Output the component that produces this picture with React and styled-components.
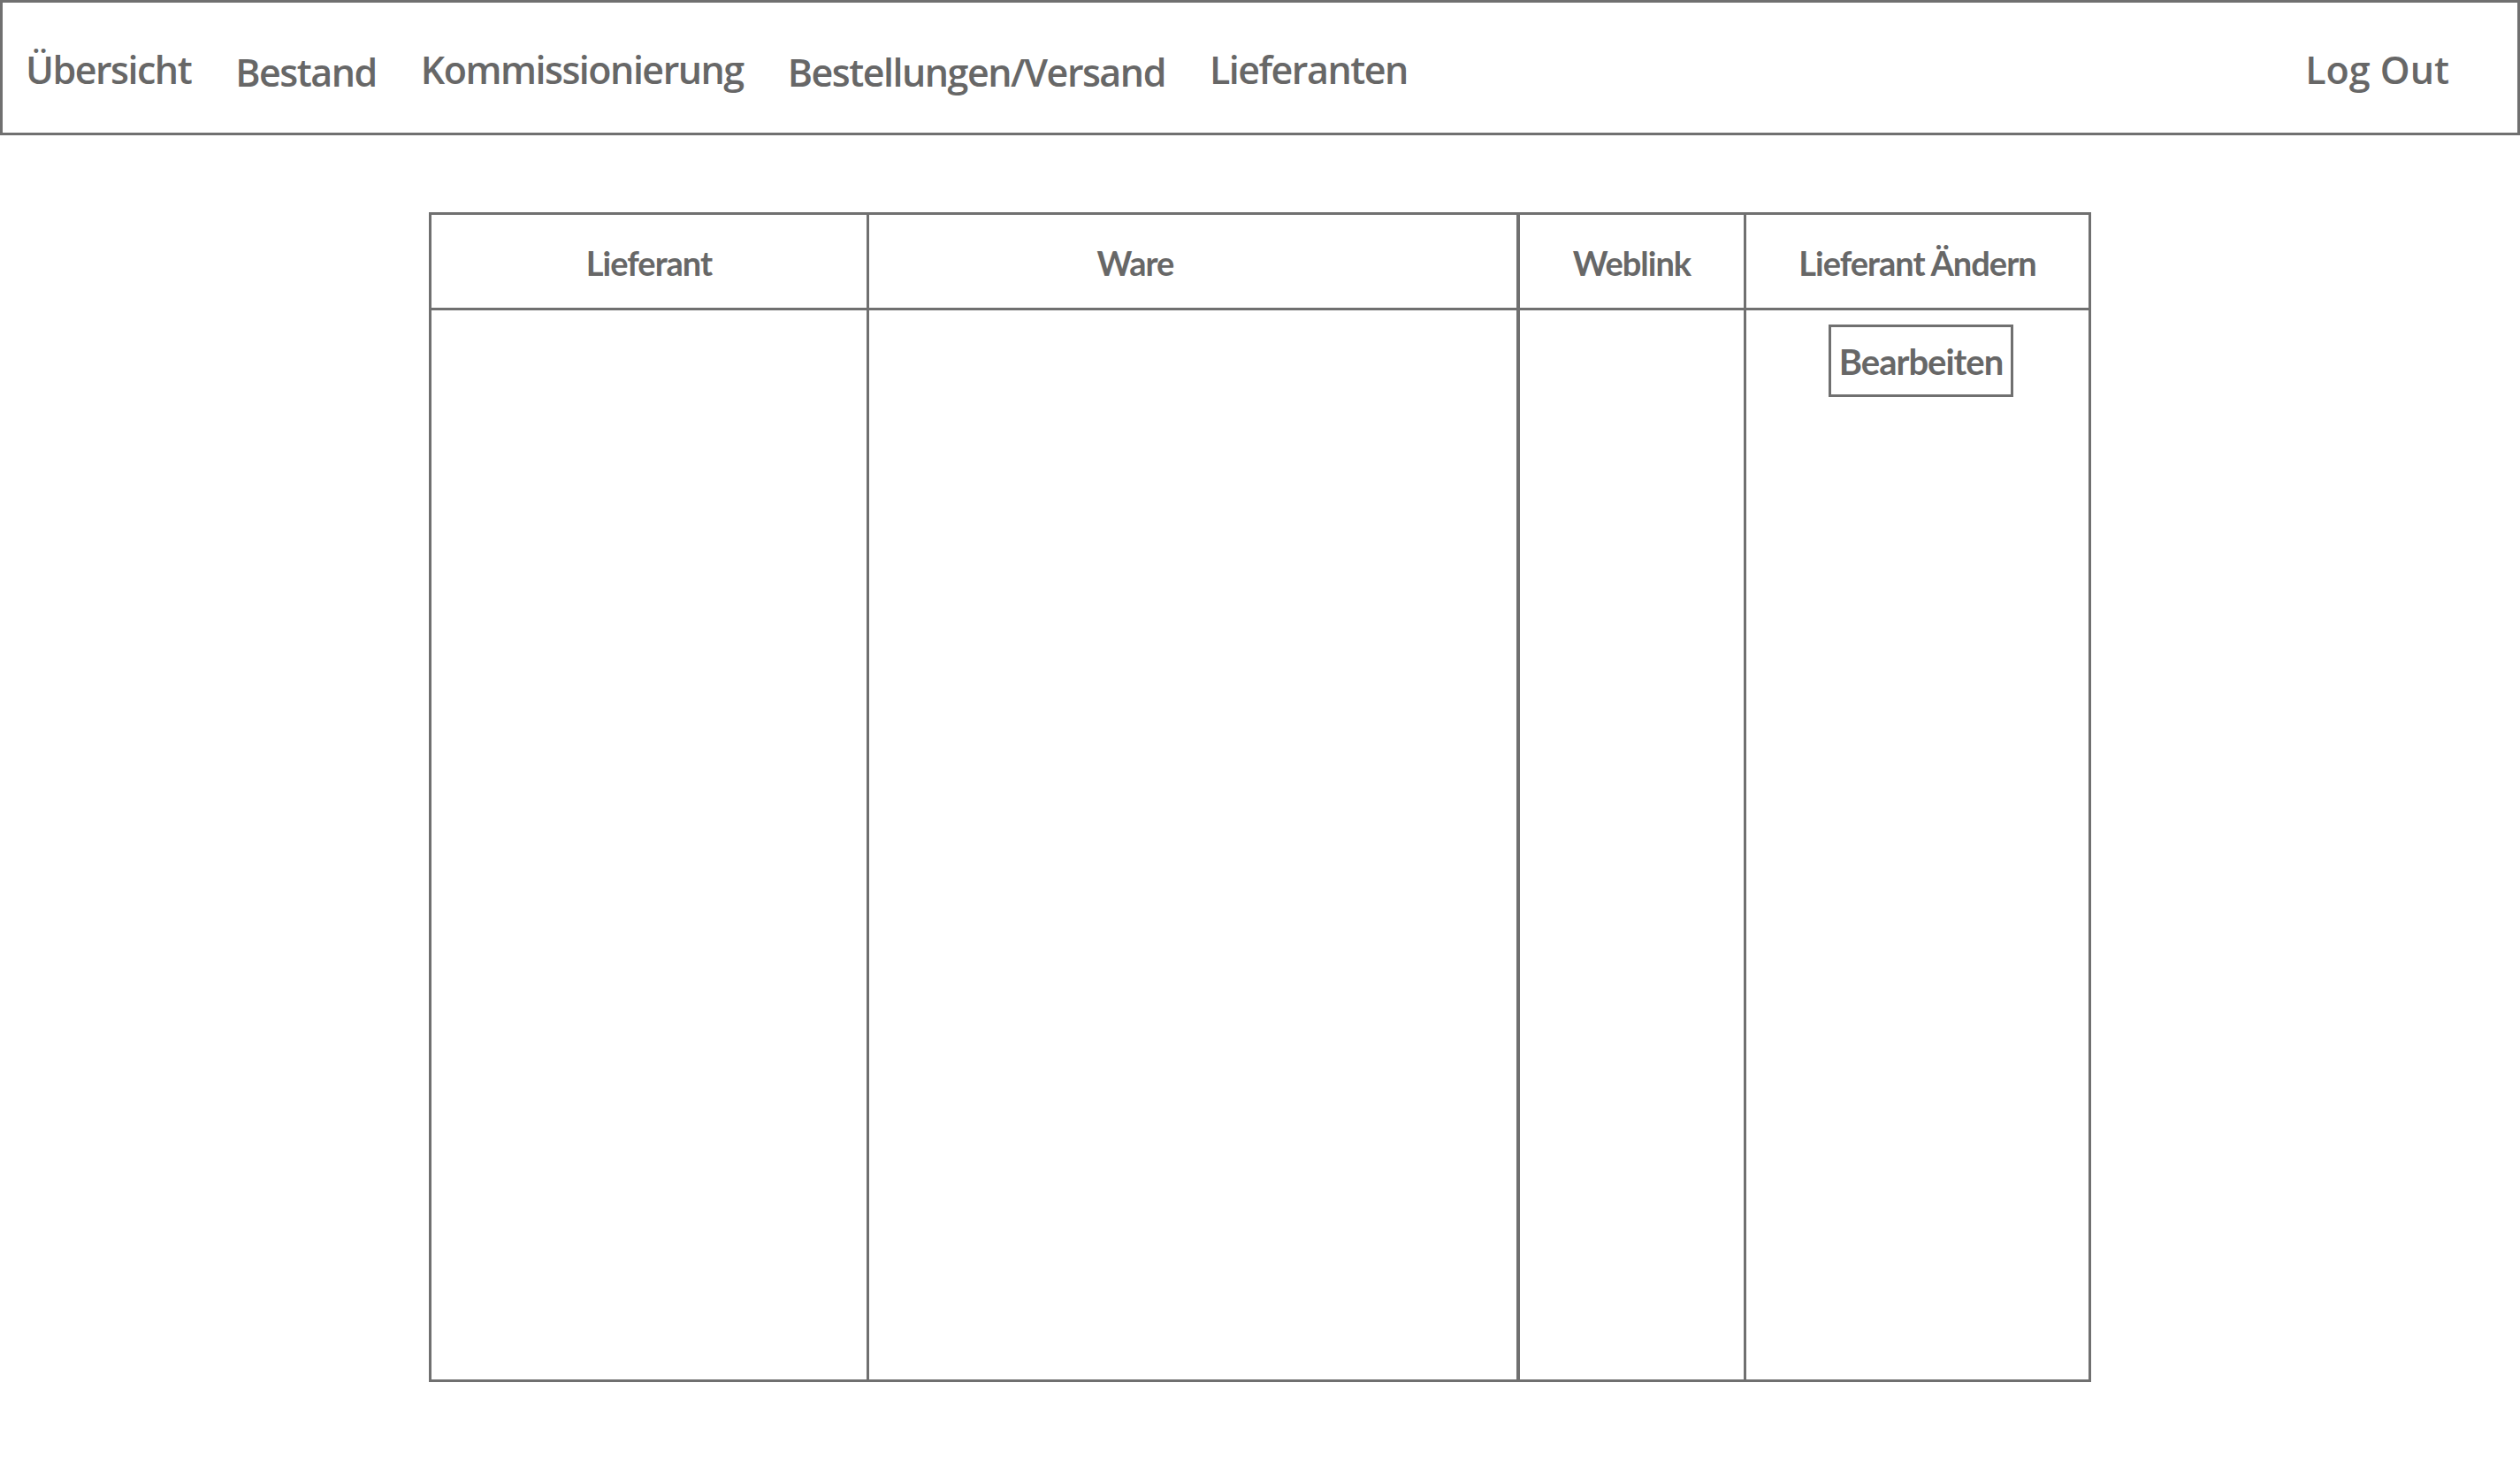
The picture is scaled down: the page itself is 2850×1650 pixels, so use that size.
import styled, { createGlobalStyle } from 'styled-components';

const line = '#707070';
const ink = '#676767';

const GlobalStyle = createGlobalStyle`
  body {
    margin: 0;
    background: #fff;
    font-family: 'Open Sans', 'Liberation Sans', sans-serif;
  }
`;

const Page = styled.div`
  display: flex;
  flex-direction: column;
  width: 2850px;
`;

const NavBar = styled.nav`
  display: flex;
  align-items: center;
  gap: 50px;
  height: 153px;
  box-sizing: border-box;
  border: 3px solid ${line};
  padding: 4px 77px 0 26px;
`;

const NavItem = styled.a`
  font-family: 'Open Sans', 'Liberation Sans', sans-serif;
  font-size: 43px;
  font-weight: 600;
  letter-spacing: ${(p) => (p.$end ? '0' : '-1.5px')};
  color: ${ink};
  text-decoration: none;
  white-space: nowrap;
  cursor: pointer;
  margin-top: ${(p) => (p.$drop ? 6 : 0)}px;
  ${(p) => p.$end && 'margin-left: auto;'}
`;

const Main = styled.main`
  display: flex;
  padding: 87px 0 0 485px;
`;

const Grid = styled.div`
  display: grid;
  grid-template-columns: 495px 736px 256px 387px;
  grid-template-rows: 108px 1209px;
  width: 1880px;
  height: 1323px;
  box-sizing: border-box;
  border: 3px solid ${line};
`;

const HeadCell = styled.div`
  display: flex;
  align-items: center;
  justify-content: center;
  box-sizing: border-box;
  border-bottom: 3px solid ${line};
  border-right: ${(p) => (p.$last ? 'none' : `${p.$rule || 3}px solid ${line}`)};
  padding-right: ${(p) => p.$shift || 0}px;
  padding-top: 2px;
  font-family: 'Lato', 'Liberation Sans', sans-serif;
  font-size: 38px;
  font-weight: 700;
  letter-spacing: -1px;
  color: ${ink};
`;

const BodyCell = styled.div`
  display: flex;
  flex-direction: column;
  align-items: center;
  box-sizing: border-box;
  padding-top: 16px;
  border-right: ${(p) => (p.$last ? 'none' : `${p.$rule || 3}px solid ${line}`)};
`;

const EditButton = styled.button`
  width: 209px;
  height: 82px;
  margin-left: 8px;
  box-sizing: border-box;
  border: 3px solid ${line};
  background: #fff;
  padding: 2px 0 0;
  font-family: 'Lato', 'Liberation Sans', sans-serif;
  font-size: 40px;
  font-weight: 700;
  letter-spacing: -1px;
  color: ${ink};
  cursor: pointer;
`;

const columns = [
  { title: 'Lieferant' },
  { title: 'Ware', shift: 130, rule: 4 },
  { title: 'Weblink' },
  { title: 'Lieferant Ändern', last: true },
];

export default function App() {
  return (
    <Page>
      <GlobalStyle />
      <NavBar>
        <NavItem>Übersicht</NavItem>
        <NavItem $drop>Bestand</NavItem>
        <NavItem>Kommissionierung</NavItem>
        <NavItem $drop>Bestellungen/Versand</NavItem>
        <NavItem>Lieferanten</NavItem>
        <NavItem $end>Log Out</NavItem>
      </NavBar>
      <Main>
        <Grid>
          {columns.map((c) => (
            <HeadCell key={c.title} $shift={c.shift} $rule={c.rule} $last={c.last}>
              {c.title}
            </HeadCell>
          ))}
          {columns.map((c) => (
            <BodyCell key={c.title} $rule={c.rule} $last={c.last}>
              {c.last && <EditButton>Bearbeiten</EditButton>}
            </BodyCell>
          ))}
        </Grid>
      </Main>
    </Page>
  );
}
